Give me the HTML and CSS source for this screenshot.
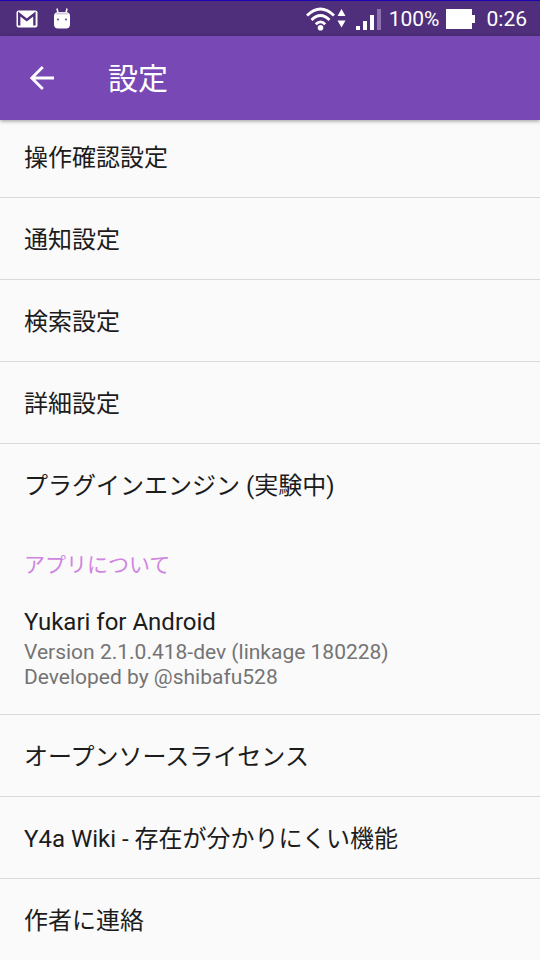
FILE: index.html
```html
<!DOCTYPE html>
<html lang="ja">
<head>
<meta charset="utf-8">
<meta name="viewport" content="width=device-width, initial-scale=1">
<title>設定</title>
<link rel="stylesheet" href="styles.css">
</head>
<body>
<div class="status">
  <div class="status-left">
    <svg width="22" height="18" viewBox="0 0 22 18" aria-hidden="true"><rect width="21" height="17" x="0.5" y="0.5" rx="2" fill="#fff"/><path d="M3.200 15.500V4L10.800 10l7.600-6v11.500" fill="none" stroke="#4f2f7b" stroke-width="2.400"/></svg>
    <svg width="18" height="22" viewBox="0 0 18 22" aria-hidden="true"><path d="M4 0.500L5 5M14 0.500L13 5" stroke="#fff" stroke-width="1.500"/><path d="M1 8Q1 4.500 5 4h8Q17 4.500 17 8v9Q16.500 20.500 13 20.500H5Q1.500 20.500 1 17z" fill="#fff"/><path d="M4.500 4.500h9l2 2H2.500z" fill="#d3cbdc"/><circle cx="5" cy="11.500" r="0.900" fill="#4f2f7b"/><circle cx="13" cy="11.500" r="0.900" fill="#4f2f7b"/></svg>
  </div>
  <div class="status-right">
    <svg width="40" height="24" viewBox="0 0 40 24" aria-hidden="true"><g fill="none" stroke="#fff" stroke-width="2.800"><path d="M1 8.500Q14.500-4.500 28 8.500"/><path d="M5.500 13Q14.500 4 23.500 13"/><path d="M9.800 17.200Q14.500 12.500 19.200 17.200"/></g><circle cx="14.500" cy="20.800" r="2.800" fill="#fff"/><path d="M31.500 9l4-7 4 7zM31.500 13.500h8L35.500 20.500z" fill="#fff"/></svg>
    <svg class="signal" width="26" height="24" viewBox="0 0 26 24" aria-hidden="true"><path d="M0 19h4v4H0zM7 14h4v9H7zM14 8h4v15h-4z" fill="#fff"/><path d="M21 2h4v21h-4z" fill="#8d72ad"/></svg>
    <span class="percent">100%</span>
    <svg width="30" height="20" viewBox="0 0 30 20" aria-hidden="true"><path d="M0 0h26v6h3v8h-3v6H0z" fill="#fff"/></svg>
    <span class="clock">0:26</span>
  </div>
</div>
<header class="toolbar">
  <button class="back" type="button" aria-label="戻る"><svg width="24" height="24" viewBox="0 0 24 24" aria-hidden="true"><path d="M24 12H2M12.800 1L1.800 12l11 11" fill="none" stroke="#fff" stroke-width="2.800"/></svg></button>
  <h1>設定</h1>
</header>
<main>
  <nav class="list list-top">
    <a class="row" href="#confirm">操作確認設定</a>
    <a class="row" href="#notify">通知設定</a>
    <a class="row" href="#search">検索設定</a>
    <a class="row" href="#detail">詳細設定</a>
    <a class="row" href="#plugin">プラグインエンジン (実験中)</a>
  </nav>
  <h2>アプリについて</h2>
  <nav class="list">
    <a class="row about" href="#about">
      <span>Yukari for Android</span>
      <span class="summary">Version 2.1.0.418-dev (linkage 180228)<br>Developed by @shibafu528</span>
    </a>
    <a class="row" href="#license">オープンソースライセンス</a>
    <a class="row" href="#wiki">Y4a Wiki - 存在が分かりにくい機能</a>
    <a class="row" href="#contact">作者に連絡</a>
  </nav>
</main>
</body>
</html>
```
FILE: styles.css
```css
* { box-sizing: border-box; }

body {
  margin: 0;
  background: #fafafa;
  color: #1c1c1c;
  font-family: Roboto, "Noto Sans CJK JP", sans-serif;
  font-size: 24px;
}

.status {
  display: flex;
  justify-content: space-between;
  align-items: center;
  height: 36px;
  padding: 1px 13px 0 16px;
  border-top: 1px solid #1c05b0;
  background: #4f2f7b;
  color: #fff;
  font-size: 21px;
}

.status-left,
.status-right {
  display: flex;
  align-items: center;
}

.status-left { gap: 15px; }
.status svg { display: block; }
.signal { margin-left: 10px; }
.percent { margin: 0 6px 0 7px; }
.clock { margin-left: 11px; }

.toolbar {
  position: relative;
  z-index: 1;
  display: flex;
  align-items: center;
  gap: 36px;
  height: 84px;
  padding: 0 12px;
  background: #7848b5;
  box-shadow: 0 1px 4px rgba(0, 0, 0, 0.4);
}

.back {
  display: flex;
  width: 60px;
  padding: 18px;
  border: 0;
  background: none;
}

h1 {
  margin: 0;
  padding-top: 2px;
  color: #fff;
  font-size: 30px;
  font-weight: 400;
  line-height: 40px;
}

.list {
  display: flex;
  flex-direction: column;
}

.list-top { margin-top: -4px; }

.row {
  display: flex;
  flex-direction: column;
  justify-content: center;
  min-height: 82px;
  padding: 2px 24px 0;
  border-bottom: 1px solid #d9d9d9;
  color: inherit;
  line-height: 32px;
  text-decoration: none;
}

.row:last-child { border-bottom: 0; }

h2 {
  margin: 0;
  padding: 24px 24px 6px;
  color: #d085e0;
  font-size: 21px;
  font-weight: 400;
  line-height: 30px;
}

.about { padding: 20px 24px 24px; }

.summary {
  margin-top: 2px;
  color: #747474;
  font-size: 21px;
  line-height: 25px;
}
```
